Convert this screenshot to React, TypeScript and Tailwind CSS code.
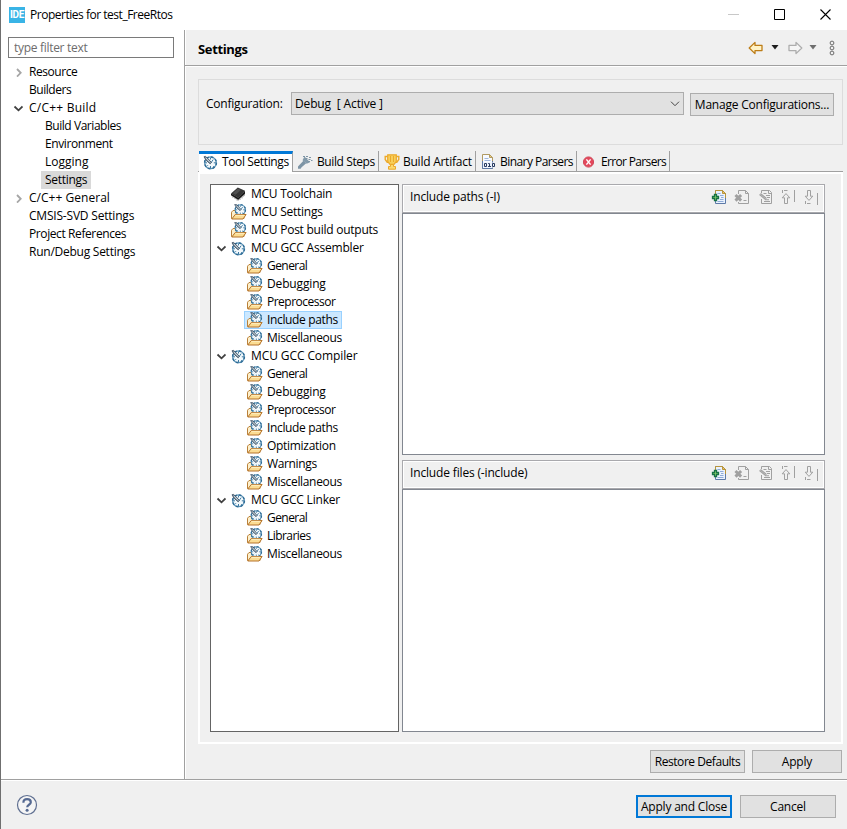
import React from 'react';
import clsx from 'clsx';

interface IconProps {
  className?: string;
}

interface NavEntry {
  label: string;
  level?: number;
  state?: 'open' | 'closed';
  selected?: boolean;
  tracking?: string;
}

interface ToolEntry {
  label: string;
  icon: 'chip' | 'folder' | 'gauge';
  child?: boolean;
  selected?: boolean;
  tracking?: string;
}

const NAV_ITEMS: NavEntry[] = [
  { label: 'Resource', state: 'closed', tracking: 'tracking-[-0.45px]' },
  { label: 'Builders', tracking: 'tracking-[-0.45px]' },
  { label: 'C/C++ Build', state: 'open', tracking: 'tracking-[0.22px]' },
  { label: 'Build Variables', level: 1, tracking: 'tracking-[-0.45px]' },
  { label: 'Environment', level: 1, tracking: 'tracking-[-0.4px]' },
  { label: 'Logging', level: 1, tracking: 'tracking-[0px]' },
  { label: 'Settings', level: 1, selected: true, tracking: 'tracking-[-0.3px]' },
  { label: 'C/C++ General', state: 'closed', tracking: 'tracking-[0.03px]' },
  { label: 'CMSIS-SVD Settings' },
  { label: 'Project References', tracking: 'tracking-[-0.4px]' },
  { label: 'Run/Debug Settings', tracking: 'tracking-[-0.25px]' },
];

const TOOL_ITEMS: ToolEntry[] = [
  { label: 'MCU Toolchain', icon: 'chip', tracking: 'tracking-[-0.25px]' },
  { label: 'MCU Settings', icon: 'folder', tracking: 'tracking-[-0.25px]' },
  { label: 'MCU Post build outputs', icon: 'folder', tracking: 'tracking-[-0.25px]' },
  { label: 'MCU GCC Assembler', icon: 'gauge' },
  { label: 'General', icon: 'folder', child: true, tracking: 'tracking-[-0.55px]' },
  { label: 'Debugging', icon: 'folder', child: true, tracking: 'tracking-[-0.15px]' },
  { label: 'Preprocessor', icon: 'folder', child: true, tracking: 'tracking-[-0.5px]' },
  { label: 'Include paths', icon: 'folder', child: true, selected: true, tracking: 'tracking-[-0.35px]' },
  { label: 'Miscellaneous', icon: 'folder', child: true, tracking: 'tracking-[-0.33px]' },
  { label: 'MCU GCC Compiler', icon: 'gauge', tracking: 'tracking-[-0.1px]' },
  { label: 'General', icon: 'folder', child: true, tracking: 'tracking-[-0.55px]' },
  { label: 'Debugging', icon: 'folder', child: true, tracking: 'tracking-[-0.15px]' },
  { label: 'Preprocessor', icon: 'folder', child: true, tracking: 'tracking-[-0.5px]' },
  { label: 'Include paths', icon: 'folder', child: true, tracking: 'tracking-[-0.35px]' },
  { label: 'Optimization', icon: 'folder', child: true, tracking: 'tracking-[-0.3px]' },
  { label: 'Warnings', icon: 'folder', child: true, tracking: 'tracking-[-0.35px]' },
  { label: 'Miscellaneous', icon: 'folder', child: true, tracking: 'tracking-[-0.33px]' },
  { label: 'MCU GCC Linker', icon: 'gauge' },
  { label: 'General', icon: 'folder', child: true, tracking: 'tracking-[-0.55px]' },
  { label: 'Libraries', icon: 'folder', child: true, tracking: 'tracking-[-0.55px]' },
  { label: 'Miscellaneous', icon: 'folder', child: true, tracking: 'tracking-[-0.33px]' },
];

const Chevron = ({ open }: { open?: boolean }) => (
  <svg width="10" height="10" viewBox="0 0 10 10" fill="none" className="shrink-0">
    {open ? (
      <path d="M1.5 3.5 5.5 7.3l4-3.8" stroke="#404040" strokeWidth="1.8" />
    ) : (
      <path d="M4 2 7.7 5.8 4 9.6" stroke="#a6a6a6" strokeWidth="1.8" />
    )}
  </svg>
);

const GaugeShape = () => (
  <>
    <circle cx="7.5" cy="7.8" r="5.9" fill="#f3f9fc" stroke="#5b93b7" strokeWidth="1.2" />
    <circle cx="7.5" cy="7.8" r="5.9" fill="none" stroke="#2f6c96" strokeWidth="1.5" strokeDasharray="2.4 2.2" />
    <path d="M7.5 2.5v2M7.5 11v2M10.8 7.8h2.2M2 7.8h2M7.8 8 10.2 4.6M10.2 11l1 1M4 11.2l1-1" stroke="#3f7ba3" />
    <path d="M1 1.8 2.4 1.4 5 3.6l3.4 4-1.2 1.2-4-3.4z" fill="#7d909d" stroke="#43566a" strokeWidth=".9" />
    <path d="m3 3 4.2 4.4" stroke="#dfe8ed" strokeWidth=".8" />
  </>
);

const GaugeIcon = ({ className }: IconProps) => (
  <svg width="15" height="15" viewBox="0 0 15 15" className={clsx('shrink-0', className)}>
    <GaugeShape />
  </svg>
);

const FolderIcon = () => (
  <svg width="16" height="16" viewBox="0 0 16 16" className="shrink-0">
    <path d="M.5 14.5V8.2L2 6.5h3l1 2h7v6z" fill="#fdf0cc" stroke="#b98039" />
    <g transform="translate(2.8 -1) scale(.87)">
      <GaugeShape />
    </g>
    <path d="M.8 15 4.2 10.5h10.9L12 15z" fill="#fbdc92" stroke="#b5732a" />
    <path d="M4.6 11.3h8.8" stroke="#fff0c4" />
  </svg>
);

const ChipIcon = () => (
  <svg width="16" height="16" viewBox="0 0 16 16" className="shrink-0">
    <path d="M.5 8v2L7 15l7-5.5V7" fill="#b5b5b5" />
    <path d="M1.5 10v2M3.5 11v2M5.5 12.5v2M9.5 12v2M11.5 10.5v2" stroke="#cfcfcf" />
    <path d="M0 7.6 6.8 1.5l7.2 3.2-6.8 7z" fill="#353535" />
    <path d="M1.8 7.3 6.9 2.6l3 1.4-5.3 4.8z" fill="#505050" />
    <path d="M0 7.6 7.2 11.7 14 4.7v3l-6.8 6L0 9.2z" fill="#181818" />
  </svg>
);

const HammerIcon = () => (
  <svg width="16" height="16" viewBox="0 0 16 16" className="shrink-0">
    <path d="M0 14.8v-2.4l5.4-5.6 2.8 2.4-4.6 4-1 1.6z" fill="#7d94a5" />
    <path d="m4.5 6.2 2-3.7L12 8.2 8.7 9.8z" fill="#8299a9" />
    <path d="M5 2.5h2M8 2.5h2M11 3.5h2M7.5 4.5h2M10.5 5.5h2M13 6.5h1.5M10 7.5h2" stroke="#7d94a5" />
  </svg>
);

const TrophyIcon = () => (
  <svg width="16" height="16" viewBox="0 0 16 16" className="shrink-0">
    <path d="M4.5 2.5H1.2v3l2 2.7H5M11.5 2.5h3.3v3l-2 2.7H11" fill="none" stroke="#eca92b" strokeWidth="1.4" />
    <path d="M3.7.8h8.6v6.7L10 10.3H6L3.7 7.5z" fill="#f8cf5a" stroke="#eca92b" strokeWidth="1.2" />
    <path d="M6.5 2v6M9.5 2v6" stroke="#eca92b" />
    <path d="M6.5 10.5h3v2h2v2.7h-7v-2.7h2z" fill="#fbd96e" stroke="#eca92b" />
  </svg>
);

const BinaryIcon = () => (
  <svg width="15" height="16" viewBox="0 0 15 16" className="shrink-0">
    <path d="M1.5 14.5V.5h7l3 3v11z" fill="#f7faff" stroke="#b19a62" />
    <path d="M1.5 7v7.5h10V7" fill="none" stroke="#5f7aa6" />
    <path d="M8.5.5v3h3z" fill="#efcf7c" stroke="#b19a62" />
    <path d="M3.5 4.5h4M3.5 6.5h6" stroke="#9fb6dc" />
    <path d="M2 8.5h12v5H2z" fill="#e9f0fb" />
    <path d="M3.5 9.5h2v3h-2zM11.5 9.5h2v3h-2z" fill="none" stroke="#27395e" />
    <path d="M7.2 9.5h1.3v3M7 12.5h3" fill="none" stroke="#27395e" />
  </svg>
);

const ErrorIcon = () => (
  <svg width="12" height="12" viewBox="0 0 12 12" className="shrink-0">
    <circle cx="5.5" cy="6" r="5.1" fill="#e4485c" stroke="#cf4a5a" />
    <path d="m3.4 3.4 4.2 5.2m0-5.2L3.4 8.6" stroke="#fff" strokeWidth="1.5" />
  </svg>
);

const AddIcon = () => (
  <svg width="16" height="16" viewBox="0 0 16 16" className="shrink-0">
    <path d="M4.5 14.5v-13h7l3 3v10z" fill="#eaf2fd" stroke="#5d7aa8" />
    <path d="M4.5 6V1.5h7l3 3V9" fill="none" stroke="#b8943c" />
    <path d="M11.5 1.5v3h3z" fill="#edc566" stroke="#b8943c" />
    <path d="M6.5 4.5h3M9 6.5h3.5M10 8.5h2.5M9 10.5h3.5M6.5 12.5h6" stroke="#8fabd8" />
    <path d="M3.5 5.5h2v2h2v2h-2v2h-2v-2h-2v-2h2z" fill="#8ed46d" stroke="#177245" strokeWidth="1.3" />
  </svg>
);

const DeleteIcon = () => (
  <svg width="16" height="16" viewBox="0 0 16 16" className="shrink-0" fill="none" stroke="#a0a0a0">
    <path d="M4.5 5V1.5h7l3 3v10h-10V13M11.5 1.5v3h3M9.5 11.5h3" />
    <path d="m1.5 6 5.6 5.6m0-5.6-5.6 5.6" strokeWidth="3" />
  </svg>
);

const EditIcon = () => (
  <svg width="16" height="16" viewBox="0 0 16 16" className="shrink-0" fill="none" stroke="#a0a0a0">
    <path d="M3.5 4V1.5h8l2 2v11h-10V10M10.5 1.5v3h3M5.5 4.5h3M8 6.5h4M9 8.5h3M6 12.5h6" />
    <path d="m1.5 5.5 6 5M2.5 4.5l6 5M7 10.8h4" strokeWidth="1.1" />
  </svg>
);

const MoveUpIcon = () => (
  <svg width="16" height="16" viewBox="0 0 16 16" className="shrink-0" fill="none" stroke="#a0a0a0">
    <path d="M3.5 14.5h3V8.8h2.3L5 4.6 1.2 8.8h2.3zM1.5 1v3M3 1.5h3.5M13.5 1v12" />
  </svg>
);

const MoveDownIcon = () => (
  <svg width="16" height="16" viewBox="0 0 16 16" className="shrink-0" fill="none" stroke="#a0a0a0">
    <path d="M3.5 1.5h3v5.7h2.3L5 11.4 1.2 7.2h2.3zM1.5 12v3M3 14.5h3.5M13.5 4v12" />
  </svg>
);

const TitleBar = () => (
  <header className="flex h-[30px] shrink-0 items-center bg-white pl-2">
    <span className="flex h-4 w-4 items-center justify-center bg-[#39b4e6] font-['Roboto',sans-serif] text-[10px] leading-none font-bold tracking-[-0.3px] text-white">
      IDE
    </span>
    <h1 className="ml-[5px] text-[12px] tracking-[-0.48px]">Properties for test_FreeRtos</h1>
    <div className="ml-auto flex items-center gap-[35px] pr-4 pb-[2px]">
      <svg width="11" height="11" viewBox="0 0 11 11"><path d="M0 5.5h11" stroke="#c8c8c8" /></svg>
      <svg width="11" height="11" viewBox="0 0 11 11"><path d="M.5.5h10v10H.5z" fill="none" stroke="#000" /></svg>
      <svg width="11" height="11" viewBox="0 0 11 11"><path d="m.5.5 10 10m0-10-10 10" stroke="#000" strokeWidth="1.1" /></svg>
    </div>
  </header>
);

const NavTree = () => (
  <nav className="w-[183px] shrink-0 bg-white pt-[7px]">
    <input
      type="text"
      placeholder="type filter text"
      className="ml-[7px] block h-[21px] w-[166px] border border-[#7a7a7a] bg-white px-[5px] text-[12px] tracking-[-0.3px] placeholder:text-[#6d6d6d]"
    />
    <ul className="mt-[5px]">
      {NAV_ITEMS.map((item) => (
        <li key={item.label} className={clsx('flex h-[18px] items-center', item.level ? 'pl-10' : 'pl-3')}>
          {!item.level && (
            <span className="mr-[2px] w-[10px] shrink-0">
              {item.state && <Chevron open={item.state === 'open'} />}
            </span>
          )}
          <span className={clsx('h-[18px] px-1 leading-[18px]', item.tracking, item.selected && 'bg-[#d9d9d9]')}>
            {item.label}
          </span>
        </li>
      ))}
    </ul>
  </nav>
);

const PageHeader = () => (
  <div className="flex h-[36px] shrink-0 items-center border-b border-[#a0a0a0] pr-[12px] pl-[13px] shadow-[0_1px_0_#fff]">
    <h2 className="mt-[3px] text-[13px] font-bold tracking-[-0.35px]">Settings</h2>
    <div className="ml-auto flex items-center">
      <svg width="16" height="14" viewBox="0 0 16 14">
        <path d="M1.2 7 7 1.4v3h7v5.2H7v3z" fill="#fff3c6" stroke="#bd7d17" strokeWidth="1.3" strokeLinejoin="round" />
      </svg>
      <svg width="8" height="5" viewBox="0 0 8 5" className="ml-[7px]"><path d="M.5 0h7L4 4.5z" fill="#1d1d1d" /></svg>
      <svg width="16" height="14" viewBox="0 0 16 14" className="ml-2">
        <path d="M14.8 7 9 1.4v3H2v5.2h7v3z" fill="#f5f5f5" stroke="#adadad" strokeWidth="1.3" strokeLinejoin="round" />
      </svg>
      <svg width="8" height="5" viewBox="0 0 8 5" className="ml-[6px]"><path d="M.5 0h7L4 4.5z" fill="#6e6e6e" /></svg>
      <svg width="6" height="16" viewBox="0 0 6 16" className="ml-[12px]" fill="none" stroke="#6c6c6c">
        <circle cx="3" cy="3" r="1.9" />
        <circle cx="3" cy="8" r="1.9" />
        <circle cx="3" cy="13" r="1.9" />
      </svg>
    </div>
  </div>
);

const Button = ({ className, children }: { className?: string; children: React.ReactNode }) => (
  <button
    type="button"
    className={clsx('flex h-[23px] items-center justify-center bg-[#e1e1e1] whitespace-nowrap', className)}
  >
    {children}
  </button>
);

const ConfigurationBar = () => (
  <section className="flex h-[66px] items-start border border-[#dcdcdc] pt-[12px] pl-[7px]">
    <label className="mt-[4px] w-[85px] tracking-[-0.22px]">Configuration:</label>
    <div className="flex h-[23px] w-[393px] items-center border border-[#adadad] bg-[#e1e1e1] pr-[3px] pl-[3px] tracking-[-0.15px] whitespace-pre">
      Debug  [ Active ]
      <svg width="10" height="6" viewBox="0 0 10 6" className="ml-auto"><path d="m1 .7 4 4 4-4" fill="none" stroke="#444" /></svg>
    </div>
    <Button className="mt-px ml-[6px] w-[144px] border border-[#adadad] tracking-[-0.22px]">Manage Configurations...</Button>
  </section>
);

const Tabs = () => (
  <div className="flex h-[21px] border-b border-[#a0a0a0] whitespace-nowrap">
    <div className="-mb-px ml-px flex w-[94px] items-center border-t-[3px] border-r border-t-[#0078d7] border-r-[#a0a0a0] bg-white pb-[2px] pl-1">
      <GaugeIcon />
      <span className="ml-1 tracking-[-0.38px]">Tool Settings</span>
    </div>
    <div className="flex w-[86px] items-center border-r border-[#a0a0a0] pt-[2px] pl-[5px]">
      <HammerIcon />
      <span className="ml-[3px] tracking-[-0.4px]">Build Steps</span>
    </div>
    <div className="flex w-[97px] items-center border-r border-[#a0a0a0] pt-[2px] pl-[5px]">
      <TrophyIcon />
      <span className="ml-[3px] tracking-[-0.25px]">Build Artifact</span>
    </div>
    <div className="flex w-[101px] items-center border-r border-[#a0a0a0] pt-[2px] pl-[5px]">
      <BinaryIcon />
      <span className="ml-1 tracking-[-0.55px]">Binary Parsers</span>
    </div>
    <div className="flex w-[93px] items-center border-r border-[#a0a0a0] pt-[2px] pl-[6px]">
      <ErrorIcon />
      <span className="ml-[6px] tracking-[-0.66px]">Error Parsers</span>
    </div>
  </div>
);

const ToolTree = () => (
  <ul className="h-[548px] w-[189px] shrink-0 border border-[#646464] bg-white">
    {TOOL_ITEMS.map((item, index) => (
      <li key={index} className={clsx('flex h-[18px] items-center', item.child ? 'pl-[33px]' : 'pl-[5px]')}>
        {!item.child && <span className="mr-[4px] w-[10px] shrink-0">{item.icon === 'gauge' && <Chevron open />}</span>}
        <span
          className={clsx(
            'flex h-[18px] items-center border pr-[3px]',
            item.child ? 'pl-[2px]' : 'pl-0',
            item.selected ? 'border-[#99d1ff] bg-[#cce8ff]' : 'border-transparent',
          )}
        >
          {item.icon === 'chip' && <ChipIcon />}
          {item.icon === 'folder' && <FolderIcon />}
          {item.icon === 'gauge' && <GaugeIcon className="mr-px" />}
          <span className={clsx('ml-1 whitespace-nowrap', item.tracking)}>{item.label}</span>
        </span>
      </li>
    ))}
  </ul>
);

const PathList = ({ title, className }: { title: string; className?: string }) => (
  <section className={clsx('flex w-[423px] flex-col', className)}>
    <div className="flex h-[29px] shrink-0 items-center border border-[#a9a9ad] pr-[4px] pb-[3px] pl-[7px] shadow-[inset_0_0_0_1px_#fff]">
      <h3 className="tracking-[-0.16px]">{title}</h3>
      <div className="ml-auto flex items-center">
        <AddIcon />
        <span className="ml-[7px] flex"><DeleteIcon /></span>
        <span className="ml-2 flex"><EditIcon /></span>
        <span className="ml-[7px] flex"><MoveUpIcon /></span>
        <span className="ml-[7px] flex"><MoveDownIcon /></span>
      </div>
    </div>
    <div className="flex-1 border border-[#828790] bg-white" />
  </section>
);

export default function App() {
  return (
    <div className="flex h-[829px] w-[847px] flex-col overflow-hidden border-l border-[#6f6f6f] bg-[#f0f0f0] font-['Open_Sans','Noto_Sans',sans-serif] text-[12px] leading-4 tracking-[-0.2px] text-black">
      <TitleBar />
      <div className="flex h-[749px] shrink-0">
        <NavTree />
        <main className="flex flex-1 flex-col border-l border-[#a0a0a0] shadow-[inset_1px_0_0_#fff]">
          <PageHeader />
          <div className="mt-[13px] pr-1 pl-[13px]">
            <ConfigurationBar />
            <div className="mt-[6px]">
              <Tabs />
              <div className="flex h-[572px] border-2 border-white pt-[10px] pl-[10px]">
                <ToolTree />
                <div className="ml-[3px] flex flex-col gap-[5px]">
                  <PathList title="Include paths (-I)" className="h-[271px]" />
                  <PathList title="Include files (-include)" className="h-[272px]" />
                </div>
              </div>
            </div>
            <div className="mt-[6px] flex justify-end gap-[7px] pr-px">
              <Button className="w-[95px] border border-[#adadad] tracking-[-0.45px]">Restore Defaults</Button>
              <Button className="w-[90px] border border-[#adadad]">Apply</Button>
            </div>
          </div>
        </main>
      </div>
      <footer className="flex flex-1 items-start border-t border-[#a0a0a0] pt-[15px] pr-[11px] pl-[15px] shadow-[inset_0_1px_0_#fff]">
        <svg width="22" height="22" viewBox="0 0 22 22" className="-mt-px">
          <circle cx="11" cy="11" r="9.5" fill="#f5f5f5" stroke="#5f6f91" strokeWidth="1.2" />
          <path d="M7.4 8.7c0-2.3 1.5-3.5 3.7-3.5 2.3 0 3.7 1.2 3.7 3 0 2.5-3.6 2.6-3.6 5" fill="none" stroke="#566a92" strokeWidth="2.2" />
          <circle cx="11.1" cy="16.2" r="1.5" fill="#566a92" />
        </svg>
        <div className="ml-auto flex gap-2">
          <Button className="w-24 border-2 border-[#0078d7]">Apply and Close</Button>
          <Button className="w-24 border border-[#adadad]">Cancel</Button>
        </div>
      </footer>
    </div>
  );
}
